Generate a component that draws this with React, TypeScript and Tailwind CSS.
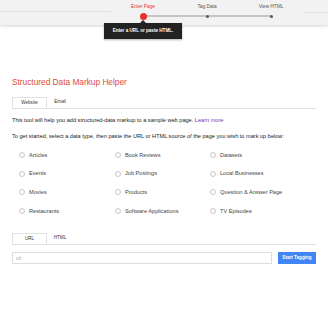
import React from 'react';

const types = [
  ['Articles', 'Book Reviews', 'Datasets'],
  ['Events', 'Job Postings', 'Local Businesses'],
  ['Movies', 'Products', 'Question & Answer Page'],
  ['Restaurants', 'Software Applications', 'TV Episodes'],
];

const steps = [
  { label: 'Enter Page', active: true },
  { label: 'Tag Data', active: false },
  { label: 'View HTML', active: false },
];

function Radio({ label }: { label: string }) {
  return (
    <label className="flex items-center gap-[4px] h-[18.7px]">
      <span className="w-[6px] h-[6px] rounded-full border-[0.6px] border-[#c8c8c8] bg-white shrink-0" />
      <span className="text-[5.6px] text-[#444]">{label}</span>
    </label>
  );
}

function Tabs({ a, b }: { a: string; b: string }) {
  return (
    <div className="flex items-end border-b-[0.6px] border-[#e2e2e2] w-[304px]">
      <div className="w-[35px] h-[11.5px] border-[0.6px] border-b-0 border-[#e2e2e2] bg-white flex items-center justify-center text-[4.6px] text-[#333] -mb-[0.6px]">
        {a}
      </div>
      <div className="w-[26px] h-[11.5px] flex items-center justify-center text-[4.6px] text-[#333]">{b}</div>
    </div>
  );
}

export default function App() {
  return (
    <div className="w-[328px] h-[320px] bg-white overflow-hidden" style={{ fontFamily: '"Liberation Sans", Arial, sans-serif' }}>
      {/* header */}
      <div className="relative z-10 h-[25px] bg-[#f2f2f2] shadow-[0_1px_3px_rgba(0,0,0,0.18)] flex items-start">
        <div className="w-[111px] pt-[9px] flex items-center">
          <span className="-ml-[2px] text-[5px] leading-none text-[#4a7fc9]">r</span>
          <div className="flex-1 h-[0.6px] bg-[#e0e0e0]" />
        </div>

        {/* stepper */}
        <div className="relative w-[192px] grid grid-cols-3 pt-[5px]">
          <div className="absolute left-[32px] top-[15px] w-[128px] h-[2px] bg-[#c4c4c4]" />
          {steps.map((s) => (
            <div key={s.label} className="flex flex-col items-center">
              <span className={`text-[4.8px] leading-none ${s.active ? 'text-[#e5322b]' : 'text-[#555]'}`}>{s.label}</span>
              <div className="h-[8px] mt-[3px] flex items-center justify-center">
                {s.active ? (
                  <div className="relative w-[7px] h-[7px] rounded-full bg-[#e5322b]">
                    {/* tooltip */}
                    <div className="absolute left-1/2 top-[7px] -translate-x-1/2 flex flex-col items-center">
                      <div className="w-0 h-0 border-l-[3px] border-r-[3px] border-b-[3px] border-l-transparent border-r-transparent border-b-[#222]" />
                      <div className="w-[78px] h-[16px] bg-[#222] flex items-center justify-center text-[4.6px] font-bold text-white whitespace-nowrap shadow-[0_1px_2px_rgba(0,0,0,0.3)]">
                        Enter a URL or paste HTML.
                      </div>
                    </div>
                  </div>
                ) : (
                  <div className="relative w-[3px] h-[3px] rounded-full bg-[#555]" />
                )}
              </div>
            </div>
          ))}
        </div>

        <div className="flex-1 pt-[11.5px]">
          <div className="h-[0.6px] bg-[#e0e0e0]" />
        </div>
      </div>

      <div className="pl-[12px] pt-[53px]">
        <h1 className="text-[8.3px] leading-none text-[#dd4b39]">Structured Data Markup Helper</h1>
        <div className="mt-[10px]">
          <Tabs a="Website" b="Email" />
        </div>
        <p className="mt-[9px] text-[5.6px] leading-none text-[#222]">
          This tool will help you add structured-data markup to a sample web page.{' '}
          <span className="text-[#6a3bc4]">Learn more</span>
        </p>
        <p className="mt-[10.5px] text-[5.6px] leading-none text-[#222]">
          To get started, select a data type, then paste the URL or HTML source of the page you wish to mark up below:
        </p>
        <div className="mt-[6px] pl-[7px] grid grid-cols-[96px_95px_auto]">
          {types.map((row) => row.map((t) => <Radio key={t} label={t} />))}
        </div>
        <div className="mt-[12px]">
          <Tabs a="URL" b="HTML" />
        </div>
        <div className="mt-[7.5px] flex items-center gap-[6px]">
          <div className="w-[260px] h-[12px] border-[0.6px] border-[#dedede] flex items-center pl-[3px] text-[4.8px] text-[#aaa]">url</div>
          <div className="w-[38px] h-[11.5px] bg-[#4285f4] flex items-center justify-center text-[4.6px] font-bold text-white">Start Tagging</div>
        </div>
      </div>
    </div>
  );
}
